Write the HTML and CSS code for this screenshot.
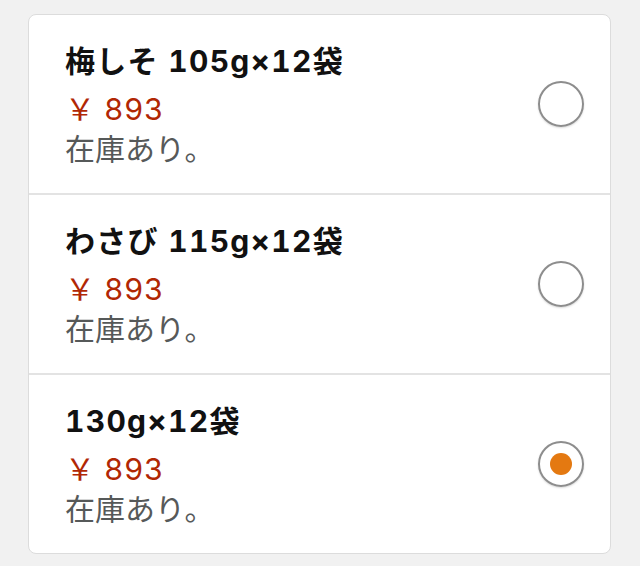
FILE: index.html
```html
<!DOCTYPE html>
<html lang="ja">
<head>
<meta charset="utf-8">
<link rel="stylesheet" href="styles.css">
</head>
<body>
<div class="card">
  <div class="row">
    <div class="info">
      <div class="title">梅しそ 105g×12袋</div>
      <div class="price">￥ 893</div>
      <div class="stock">在庫あり。</div>
    </div>
    <span class="radio"></span>
  </div>
  <div class="row">
    <div class="info">
      <div class="title">わさび 115g×12袋</div>
      <div class="price">￥ 893</div>
      <div class="stock">在庫あり。</div>
    </div>
    <span class="radio"></span>
  </div>
  <div class="row">
    <div class="info">
      <div class="title">130g×12袋</div>
      <div class="price">￥ 893</div>
      <div class="stock">在庫あり。</div>
    </div>
    <span class="radio checked"></span>
  </div>
</div>
</body>
</html>
```
FILE: styles.css
```css
html, body {
  margin: 0;
  padding: 0;
  background: #f1f1f1;
}
body {
  padding: 14px 29px 12px 28px;
  font-family: "Inter", "Noto Sans CJK JP", sans-serif;
}
.card {
  background: #fff;
  border: 1.5px solid #dcdcdc;
  border-radius: 8px;
  overflow: hidden;
}
.row {
  display: flex;
  align-items: center;
  justify-content: space-between;
  padding: 26px 26px 24px 36px;
  height: 128px;
}
.row + .row {
  border-top: 2px solid #e3e3e3;
}
.info {
  display: flex;
  flex-direction: column;
}
.title {
  font-size: 30px;
  line-height: 40px;
  font-weight: bold;
  color: #111;
  margin-bottom: 8px;
  font-variant-numeric: tabular-nums;
  letter-spacing: 1.3px;
}
.price {
  font-size: 30px;
  line-height: 40px;
  color: #b12704;
  font-variant-numeric: tabular-nums;
  letter-spacing: 0.5px;
}
.stock {
  font-size: 30px;
  line-height: 40px;
  color: #565959;
}
.radio {
  width: 42px;
  height: 42px;
  border: 2px solid #8d8d8d;
  border-radius: 50%;
  box-shadow: 0 1px 2px rgba(0,0,0,0.15);
  display: flex;
  align-items: center;
  justify-content: center;
  margin-bottom: 2px;
}
.radio.checked::after {
  content: "";
  width: 22px;
  height: 22px;
  border-radius: 50%;
  background: #e47911;
}
```
